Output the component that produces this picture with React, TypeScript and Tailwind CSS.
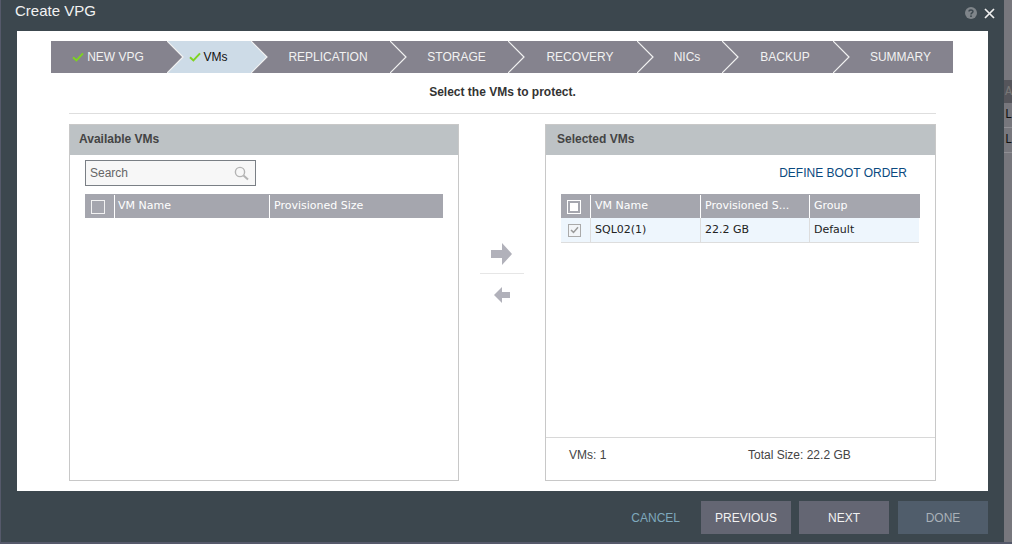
const steps = [
  { label: 'NEW VPG', width: 116, done: true },
  { label: 'VMs', width: 84, done: true, active: true },
  { label: 'REPLICATION', width: 139 },
  { label: 'STORAGE', width: 118 },
  { label: 'RECOVERY', width: 129 },
  { label: 'NICs', width: 85 },
  { label: 'BACKUP', width: 111 },
  { label: 'SUMMARY', width: 120, last: true },
];

function CheckMark() {
  return (
    <svg width="12" height="10" viewBox="0 0 12 10" className="mr-[3px]">
      <path d="M1 5.2 L4.4 8.4 L11 1.4" fill="none" stroke="#7ed321" strokeWidth="2" />
    </svg>
  );
}

function Step({ label, width, done, active, last }: { label: string; width: number; done?: boolean; active?: boolean; last?: boolean }) {
  const fill = active ? '#cddbe7' : '#85838e';
  return (
    <div
      className={`relative flex h-8 shrink-0 items-center justify-center text-xs ${active ? 'bg-[#cddbe7] text-[#111]' : 'bg-[#85838e] text-[#f2f2f2]'} ${done ? 'pr-[2px]' : 'pl-[15px]'}`}
      style={{ width }}
    >
      {done && <CheckMark />}
      <span>{label}</span>
      {!last && (
        <svg width="17" height="32" viewBox="0 0 17 32" className="absolute top-0 left-full z-10">
          <polygon points="0,0 16,16 0,32" fill={fill} />
          <polyline points="0,0 16,16 0,32" fill="none" stroke="#f2f2f2" strokeWidth="1.2" />
        </svg>
      )}
    </div>
  );
}

function HeaderCell({ className, children }: { className: string; children: React.ReactNode }) {
  return <div className={`flex h-full items-center border-r border-white ${className}`}>{children}</div>;
}

function PanelHeader({ title, className }: { title: string; className: string }) {
  return (
    <div className={`flex h-[30px] shrink-0 items-center bg-[#bdc2c5] pb-[3px] text-xs font-bold text-[#444] ${className}`}>
      {title}
    </div>
  );
}

export default function App() {
  return (
    <div className="flex h-[544px] w-[1012px] flex-col overflow-hidden bg-[#55596a] font-['Liberation_Sans',sans-serif]">
      <div className="flex h-[542px]">
        <div className="w-px bg-[#55596a]" />
        {/* Dialog */}
        <div className="flex w-[1003px] flex-col bg-[#3c474e] px-4">
          <div className="relative flex h-[31px] shrink-0 items-start justify-between">
            <span className="-ml-[2px] text-[15px] text-[#f2f2f2]">Create VPG</span>
            <div className="-mr-[7px] flex items-center gap-[7px] pt-[7px]">
              <svg width="12" height="12" viewBox="0 0 12 12">
                <circle cx="6" cy="6" r="6" fill="#7f858a" />
                <path d="M4 4.6 C4 2.4 8 2.4 8 4.5 C8 5.8 6 5.9 6 7.4" fill="none" stroke="#3c474e" strokeWidth="1.4" />
                <rect x="5.2" y="8.4" width="1.6" height="1.6" fill="#3c474e" />
              </svg>
              <svg width="11" height="11" viewBox="0 0 11 11">
                <path d="M1 1 L10 10 M10 1 L1 10" stroke="#f0f0f0" strokeWidth="1.7" />
              </svg>
            </div>
          </div>

          <div className="flex h-[460px] w-[971px] shrink-0 flex-col bg-white pt-[10px]">
            <div className="flex pl-[34px]">
              {steps.map((s) => (
                <Step key={s.label} {...s} />
              ))}
            </div>

            <div className="flex h-10 shrink-0 items-center justify-center pb-[2px] text-xs font-bold text-[#333]">
              Select the VMs to protect.
            </div>
            <div className="mx-[52px] h-px shrink-0 bg-[#dedede]" />

            <div className="mt-[10px] flex h-[357px] pl-[52px]">
              {/* Available VMs */}
              <div className="flex w-[390px] flex-col border border-[#c8c8c8]">
                <PanelHeader title="Available VMs" className="pl-[9px]" />
                <div className="px-[15px] pt-[5px]">
                  <div className="flex h-[26px] w-[171px] items-center justify-between border border-[#7a7f85] bg-[#f7f7f7] pr-[6px] pl-[4px] text-xs text-[#666]">
                    <span>Search</span>
                    <svg width="15" height="15" viewBox="0 0 15 15">
                      <circle cx="6" cy="6" r="4.6" fill="none" stroke="#b4b4b4" strokeWidth="1.4" />
                      <path d="M9.5 9.5 L14 13.6" stroke="#b4b4b4" strokeWidth="2" />
                    </svg>
                  </div>
                  <div className="mt-2 flex h-6 w-[358px] bg-[#a5a6ae] pt-px font-['DejaVu_Sans',sans-serif] text-[11px] text-white">
                    <HeaderCell className="w-[30px] justify-center pr-[4px]">
                      <div className="h-[14px] w-[14px] border border-[#f2f2f2]" />
                    </HeaderCell>
                    <HeaderCell className="w-[155px] pl-[3px]">VM Name</HeaderCell>
                    <div className="flex h-full items-center pl-[4px]">Provisioned Size</div>
                  </div>
                </div>
              </div>

              {/* Move arrows */}
              <div className="flex w-[86px] flex-col items-center pt-[119px]">
                <svg width="22" height="22" viewBox="0 0 22 22">
                  <polygon points="0,7 11,7 11,0 21,11 11,22 11,15 0,15" fill="#b1b1ba" />
                </svg>
                <div className="mt-[8px] h-px w-11 bg-[#e6e6e6]" />
                <svg width="17" height="17" viewBox="0 0 17 17" className="mt-[13px]">
                  <polygon points="16,5 8,5 8,0 0,8 8,16 8,11 16,11" fill="#b1b1ba" />
                </svg>
              </div>

              {/* Selected VMs */}
              <div className="flex w-[391px] flex-col border border-[#c8c8c8]">
                <PanelHeader title="Selected VMs" className="pl-[11px]" />
                <div className="flex-1 px-[15px]">
                  <div className="flex h-[39px] items-start justify-end pt-[10px] pr-[13px] text-xs text-[#0a4a80]">
                    DEFINE BOOT ORDER
                  </div>
                  <div className="flex h-6 w-[359px] bg-[#a5a6ae] pt-px font-['DejaVu_Sans',sans-serif] text-[11px] text-white">
                    <HeaderCell className="w-[30px] justify-center pr-[4px]">
                      <div className="flex h-[14px] w-[14px] items-center justify-center border border-white">
                        <div className="h-2 w-2 bg-white" />
                      </div>
                    </HeaderCell>
                    <HeaderCell className="w-[110px] pl-[4px]">VM Name</HeaderCell>
                    <HeaderCell className="w-[109px] pl-[4px]">Provisioned S...</HeaderCell>
                    <div className="flex h-full items-center pl-[4px]">Group</div>
                  </div>
                  <div className="flex h-[25px] w-[358px] border-b border-[#dddddd] bg-[#eef6fd] font-['DejaVu_Sans',sans-serif] text-[11px] text-[#222]">
                    <div className="flex h-full w-[30px] items-center justify-center border-r border-[#dddddd] pr-[3px]">
                      <div className="flex h-[13px] w-[13px] items-center justify-center border border-[#aaaaaa] bg-[#f2f5f8]">
                        <svg width="9" height="8" viewBox="0 0 9 8">
                          <path d="M1 4 L3.5 6.4 L8 1.2" fill="none" stroke="#9a9a9a" strokeWidth="1.5" />
                        </svg>
                      </div>
                    </div>
                    <div className="flex h-full w-[110px] items-center border-r border-[#dddddd] pl-[4px]">SQL02(1)</div>
                    <div className="flex h-full w-[109px] items-center border-r border-[#dddddd] pl-[4px]">22.2 GB</div>
                    <div className="flex h-full items-center pl-[4px]">Default</div>
                  </div>
                </div>
                <div className="flex h-[43px] shrink-0 items-start border-t border-[#d8d8d8] pt-[9px] text-xs text-[#444]">
                  <span className="w-[202px] pl-[23px]">VMs: 1</span>
                  <span>Total Size: 22.2 GB</span>
                </div>
              </div>
            </div>
          </div>

          {/* Footer */}
          <div className="flex items-start justify-end pt-[10px] text-xs">
            <span className="mr-[21px] flex h-[33px] items-center text-[#7fa9bd]">CANCEL</span>
            <button className="mr-2 h-[33px] w-[90px] bg-[#646673] text-[#f2f2f2]">PREVIOUS</button>
            <button className="mr-[9px] h-[33px] w-[90px] bg-[#646673] text-[#f2f2f2]">NEXT</button>
            <button className="h-[33px] w-[90px] bg-[#505d6b] text-[#a9b1b8]">DONE</button>
          </div>
        </div>

        {/* Page behind the dialog */}
        <div className="flex flex-1 flex-col overflow-hidden bg-[#77777d] pt-[80px] font-['Liberation_Mono',monospace] text-xs text-[#111]">
          <div className="flex h-[23px] shrink-0 items-center bg-[#55555b] pl-px text-[#777]">Ad</div>
          <div className="flex h-[25px] shrink-0 items-center border-b border-[#8f8f94] pl-px">L1</div>
          <div className="flex h-[25px] shrink-0 items-center border-b border-[#8f8f94] pl-px">L1</div>
        </div>
      </div>
    </div>
  );
}
